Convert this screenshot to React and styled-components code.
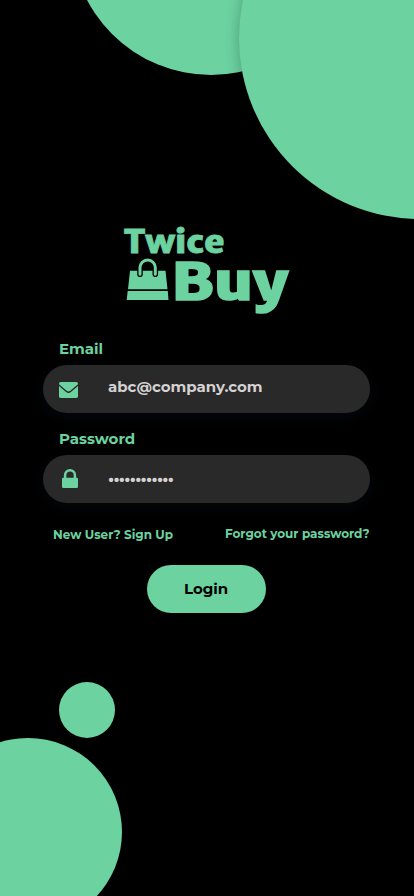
import React from "react";
import styled, { createGlobalStyle } from "styled-components";

const green = "#6cd2a0";

const GlobalStyle = createGlobalStyle`
  *, *::before, *::after { box-sizing: border-box; }
  html, body { margin: 0; background: #000; }
  body { font-family: Montserrat, Inter, "Open Sans", sans-serif; }
`;

const Screen = styled.main`
  position: relative;
  width: 414px;
  height: 896px;
  overflow: hidden;
  background: #000;
  display: flex;
  flex-direction: column;
`;

const Bubble = styled.span`
  position: absolute;
  left: ${(p) => p.$x - p.$r}px;
  top: ${(p) => p.$y - p.$r}px;
  width: ${(p) => p.$r * 2}px;
  height: ${(p) => p.$r * 2}px;
  border-radius: 50%;
  background: ${green};
  box-shadow: 0 3px 15px rgba(0, 0, 0, 0.26);
`;

const Logo = styled.svg`
  display: block;
  margin: 210px 0 0 108px;
  width: 196px;
  height: 120px;
  flex: none;
  fill: ${green};
`;

const LogoText = styled.text`
  font-family: "Merriweather Sans", "Noto Sans", "Open Sans", sans-serif;
  font-weight: 800;
  font-size: ${(p) => p.$size}px;
  stroke: ${green};
  stroke-width: ${(p) => p.$stroke}px;
`;

const Form = styled.form`
  position: relative;
  margin: 10px 44px 0 43px;
  display: flex;
  flex-direction: column;
`;

const Field = styled.label`
  display: block;
  height: 90px;
`;

const Label = styled.span`
  display: block;
  height: 25px;
  padding-left: 16px;
  line-height: 18px;
  font-size: 15px;
  font-weight: 700;
  color: ${green};
`;

const InputBox = styled.span`
  display: flex;
  align-items: center;
  height: 48px;
  border-radius: 24px;
  background: #292929;
  box-shadow: 0 4px 16px rgba(69, 91, 154, 0.09);
`;

const IconSlot = styled.span`
  display: flex;
  width: 65px;
  padding-left: ${(p) => p.$inset}px;
  padding-top: ${(p) => p.$drop || 0}px;
  color: ${green};
`;

const Value = styled.span`
  padding-bottom: 4px;
  font-size: 15px;
  line-height: 18px;
  font-weight: 700;
  color: #d4d2d2;
`;

const Dots = styled.span`
  font-size: 17px;
  line-height: 18px;
  font-weight: 700;
  letter-spacing: -0.72px;
  color: #d4d2d2;
`;

const Links = styled.div`
  display: flex;
  justify-content: space-between;
  height: 45px;
  padding: 6px 0.5px 0 10px;
`;

const Link = styled.a`
  margin-top: ${(p) => p.$drop || 0}px;
  font-size: 12px;
  line-height: 16px;
  font-weight: 700;
  white-space: nowrap;
  color: ${green};
`;

const LoginButton = styled.button`
  width: 119px;
  height: 48px;
  margin: 0 0 0 104px;
  padding: 0 1px 0 0;
  border: 0;
  border-radius: 24px;
  background: ${green};
  color: #000;
  font: 700 15px/18px Montserrat, Inter, sans-serif;
`;

function BrandLogo() {
  return (
    <Logo viewBox="108 210 196 120" role="img" aria-label="Twice Buy">
      <LogoText $size={31.5} $stroke={0.8} x="124" y="253" textLength="100.5" lengthAdjust="spacingAndGlyphs">Twice</LogoText>
      <LogoText $size={52} $stroke={1.6} x="171.5" y="299.5" textLength="116.7" lengthAdjust="spacingAndGlyphs">Buy</LogoText>
      <path d="M130 270.7H165.5L167.5 289.2H128Z M127.7 291H167.8L168.5 300H126.7Z" />
      <path d="M140 274.3V267.6A7.65 7.65 0 0 1 155.3 267.6V274.3" fill="none" stroke="#000" strokeWidth="5.6" strokeLinecap="round" />
      <path d="M140 274.3V267.6A7.65 7.65 0 0 1 155.3 267.6V274.3" fill="none" stroke={green} strokeWidth="3" strokeLinecap="round" />
    </Logo>
  );
}

function MailIcon() {
  return (
    <svg width="19" height="16" viewBox="0 0 19 16">
      <rect width="19" height="16" rx="1.7" fill="currentColor" />
      <path d="M-.5 2.6L7.2 9.2Q9.5 11.2 11.8 9.2L19.5 2.6" fill="none" stroke="#292929" strokeWidth="1.3" />
    </svg>
  );
}

function LockIcon() {
  return (
    <svg width="16" height="20" viewBox="0 0 16 20">
      <rect y="8.7" width="16" height="10.3" rx="1.2" fill="currentColor" />
      <path d="M3.1 10V6.2a4.9 4.9 0 0 1 9.8 0V10" fill="none" stroke="currentColor" strokeWidth="2.5" />
    </svg>
  );
}

export default function App() {
  return (
    <Screen>
      <GlobalStyle />
      <Bubble $x={211} $y={-65} $r={140} />
      <Bubble $x={420} $y={38} $r={181} />
      <Bubble $x={87} $y={710} $r={28} />
      <Bubble $x={28} $y={832} $r={94} />
      <BrandLogo />
      <Form>
        <Field>
          <Label>Email</Label>
          <InputBox>
            <IconSlot $inset={16} $drop={2}><MailIcon /></IconSlot>
            <Value>abc@company.com</Value>
          </InputBox>
        </Field>
        <Field>
          <Label>Password</Label>
          <InputBox>
            <IconSlot $inset={19}><LockIcon /></IconSlot>
            <Dots>••••••••••••</Dots>
          </InputBox>
        </Field>
        <Links>
          <Link $drop={1}>New User? Sign Up</Link>
          <Link>Forgot your password?</Link>
        </Links>
        <LoginButton type="button">Login</LoginButton>
      </Form>
    </Screen>
  );
}
